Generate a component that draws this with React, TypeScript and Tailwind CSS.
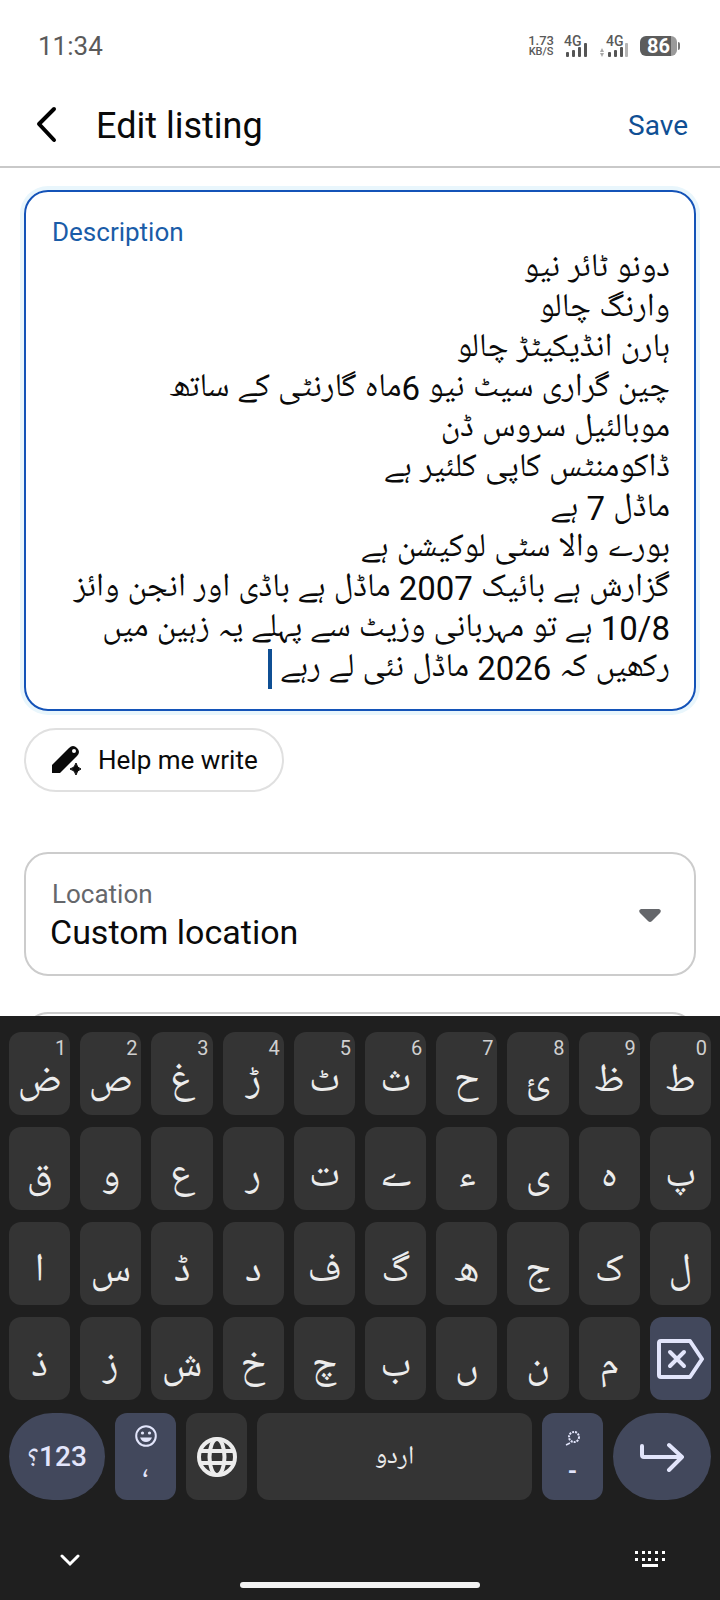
import React, { useState } from 'react'

const initialText = [
  'دونو ٹائر نیو',
  'وارنگ چالو',
  'ہارن انڈیکیٹڑ چالو',
  'چین گراری سیٹ نیو 6ماہ گارنٹی کے ساتھ',
  'موبالئیل سروس ڈن',
  'ڈاکومنٹس کاپی کلئیر ہے',
  'ماڈل 7 ہے',
  'بورے والا سٹی لوکیشن ہے',
  'گزارش ہے بائیک 2007 ماڈل ہے باڈی اور انجن وائز',
  '10/8 ہے تو مہربانی وزیٹ سے پہلے یہ زہین میں',
  'رکھیں کہ 2026 ماڈل نئی لے رہے',
].join('\n')

const keyRows = [
  ['ض', 'ص', 'غ', 'ڑ', 'ٹ', 'ث', 'ح', 'ئ', 'ظ', 'ط'],
  ['ق', 'و', 'ع', 'ر', 'ت', 'ے', 'ء', 'ی', 'ہ', 'پ'],
  ['ا', 'س', 'ڈ', 'د', 'ف', 'گ', 'ھ', 'ج', 'ک', 'ل'],
  ['ذ', 'ز', 'ش', 'خ', 'چ', 'ب', 'ں', 'ن', 'م'],
]
const hints = ['1', '2', '3', '4', '5', '6', '7', '8', '9', '0']

function Signal({ weak = false }: { weak?: boolean }) {
  return (
    <div className="relative h-6 w-7">
      <span className={`absolute top-0 text-sm font-medium leading-none ${weak ? 'left-1.5' : 'left-0'}`}>4G</span>
      <svg className="absolute bottom-0 left-0" width="28" height="15" viewBox="0 0 28 15">
        {weak && <path d="M0 9l2-4 2 4zM0 10l2 4 2-4z" fill="#a8a8a8" />}
        <g fill="#555">
          <rect x={weak ? 8 : 2} y="9" width="3" height="5" rx="1" />
          <rect x={weak ? 14 : 8} y="7" width="3" height="7" rx="1" />
          <rect x={weak ? 20 : 14} y="4" width="3" height="10" rx="1" />
          <rect x={weak ? 25 : 20} y="0" width="3" height="14" rx="1" fill={weak ? '#b5b5b5' : '#555'} />
        </g>
      </svg>
    </div>
  )
}

function StatusBar() {
  return (
    <div className="flex h-20 shrink-0 items-center justify-between pl-[38px] pr-10 pt-3 text-[#5a5a5a]">
      <span className="text-[26px] leading-8">11:34</span>
      <div className="flex items-center">
        <div className="mr-2.5 text-center font-medium leading-none">
          <div className="text-[13px] leading-[11px]">1.73</div>
          <div className="text-[11px] leading-[11px]">KB/S</div>
        </div>
        <Signal />
        <div className="ml-2">
          <Signal weak />
        </div>
        <div className="ml-3 flex items-center">
          <div className="flex h-5 w-[37px] items-center justify-center rounded-md bg-linear-to-r from-[#5c5c5c] from-85% to-[#9a9a9a] to-85% text-xl font-bold leading-none text-white">
            86
          </div>
          <div className="ml-px h-2 w-0.5 rounded-r bg-[#777]" />
        </div>
      </div>
    </div>
  )
}

function LetterKey({ letter, hint }: { letter: string; hint?: string }) {
  return (
    <button className="relative h-[83px] rounded-xl bg-[#343434] pt-[18px] text-[40px] leading-none text-[#ececec]">
      {letter}
      {hint && <span className="absolute right-1 top-1.5 text-xl leading-5 text-[#d0d0d0]">{hint}</span>}
    </button>
  )
}

function Keyboard() {
  return (
    <div className="shrink-0 bg-[#1f1f1f] px-[9px] pt-4">
      <div className="grid grid-cols-10 gap-x-2.5 gap-y-3">
        {keyRows.map((row, r) =>
          row.map((letter, i) => <LetterKey key={letter} letter={letter} hint={r === 0 ? hints[i] : undefined} />)
        )}
        <button aria-label="Backspace" className="flex h-[83px] items-center justify-center rounded-xl bg-[#42485c]">
          <svg width="48" height="40" viewBox="0 0 48 40" fill="none" stroke="#e2e5fb" strokeWidth="4" strokeLinecap="round" strokeLinejoin="round">
            <path d="M5 2H34L46 20L34 38H5Q3 38 3 36V4Q3 2 5 2Z" />
            <path d="M14 13L28 27M28 13L14 27" />
          </svg>
        </button>
      </div>

      <div className="mt-[13px] flex h-[87px] gap-2.5 text-[#e2e5fb]">
        <button className="flex w-24 items-center justify-center rounded-full bg-[#42485c] text-[28px] font-medium">
          <span className="pt-1 font-normal">؟</span>
          <span>123</span>
        </button>
        <button className="flex w-[61px] flex-col items-center rounded-xl bg-[#42485c] pt-3">
          <svg width="22" height="22" viewBox="0 0 22 22">
            <circle cx="11" cy="11" r="9.8" fill="none" stroke="#e2e5fb" strokeWidth="2" />
            <circle cx="7.5" cy="8" r="1.6" fill="#e2e5fb" />
            <circle cx="14.5" cy="8" r="1.6" fill="#e2e5fb" />
            <path d="M5 12.5H17Q15 17 11 17T5 12.5Z" fill="#e2e5fb" />
          </svg>
          <span className="mt-2.5 text-3xl leading-6">،</span>
        </button>
        <button aria-label="Change language" className="flex w-[61px] items-center justify-center rounded-xl bg-[#343434]">
          <svg width="40" height="40" viewBox="0 0 40 40" fill="none" stroke="#ececec" strokeWidth="4">
            <circle cx="20" cy="20" r="18" />
            <ellipse cx="20" cy="20" rx="7.5" ry="18" />
            <path d="M3 14H37M3 26H37" />
          </svg>
        </button>
        <button className="min-w-0 flex-1 rounded-xl bg-[#343434] pt-1 text-[26px] text-[#ececec]">اردو</button>
        <button className="flex w-[61px] flex-col items-center rounded-xl bg-[#42485c] pt-4">
          <svg width="18" height="20" viewBox="0 0 18 20" fill="none" stroke="#e2e5fb">
            <circle cx="10" cy="8" r="5" strokeWidth="2" strokeDasharray="2 1" />
            <path d="M2 16L6 14" strokeWidth="1.5" />
          </svg>
          <span className="mt-2.5 text-2xl font-bold leading-6">-</span>
        </button>
        <button aria-label="Enter" className="flex w-[98px] items-center justify-center rounded-full bg-[#42485c]">
          <svg width="46" height="30" viewBox="0 0 46 30" fill="none" stroke="#e2e5fb" strokeWidth="4" strokeLinecap="round" strokeLinejoin="round">
            <path d="M3 4V13Q3 15 5 15H43M30 3L43 15L30 28" />
          </svg>
        </button>
      </div>

      <div className="relative mt-10 flex h-[60px] items-start justify-between pl-[51px] pr-[46px] pt-[11px]">
        <button aria-label="Hide keyboard" className="pt-0.5">
          <svg width="20" height="14" viewBox="0 0 20 14" fill="none" stroke="#fff" strokeWidth="3" strokeLinecap="round">
            <path d="M2 3L10 11L18 3" />
          </svg>
        </button>
        <button aria-label="Switch keyboard">
          <svg width="30" height="17" viewBox="0 0 30 17" fill="#fff">
            <path d="M0 0h3v3h-3zM7 0h3v3h-3zM13 0h3v3h-3zM20 0h3v3h-3zM27 0h3v3h-3zM0 7h3v3h-3zM7 7h3v3h-3zM13 7h3v3h-3zM20 7h3v3h-3zM27 7h3v3h-3zM7 13h16v3h-16z" />
          </svg>
        </button>
        <div className="absolute bottom-3 left-1/2 h-1.5 w-60 -translate-x-1/2 rounded-full bg-[#f2f2f2]" />
      </div>
    </div>
  )
}

export default function App() {
  const [text, setText] = useState(initialText)

  return (
    <div className="flex h-screen flex-col overflow-hidden bg-white font-[Roboto,'Noto_Naskh_Arabic_UI','Noto_Naskh_Arabic','Noto_Sans_Arabic',sans-serif] text-[#0a0a0a]">
      <StatusBar />
      <header className="flex h-22 shrink-0 items-center border-b-2 border-[#c9c9c9] pl-9 pr-8 pt-1">
        <button aria-label="Back">
          <svg width="22" height="38" viewBox="0 0 22 38" fill="none" stroke="#000" strokeWidth="4" strokeLinecap="round" strokeLinejoin="round">
            <path d="M18 3L3 18L18 34" />
          </svg>
        </button>
        <h1 className="ml-[38px] pt-0.5 text-4xl leading-10">Edit listing</h1>
        <button className="ml-auto pt-0.5 text-[28px] leading-10 text-[#0f4f94]">Save</button>
      </header>

      <main className="min-h-0 flex-1 overflow-hidden px-6 pt-[22px]">
        <div className="rounded-3xl border-2 border-[#1453b8] px-6 pb-5 pt-6 shadow-[0_0_0_4px_#e9f6fc]">
          <label htmlFor="description" className="block pl-0.5 text-[26px] leading-8 text-[#1a5ca8]">
            Description
          </label>
          <div className="relative pt-px">
            <textarea
              id="description"
              dir="rtl"
              rows={11}
              value={text}
              onChange={(e) => setText(e.target.value)}
              className="block w-full resize-none overflow-hidden whitespace-pre bg-transparent text-[33px] leading-10 caret-transparent outline-none"
            />
            <span className="absolute bottom-0 right-[398px] h-10 w-1 bg-[#0f4f94]" />
          </div>
        </div>

        <button className="mt-[17px] flex h-16 items-center rounded-full border-2 border-[#e0e0e0] pl-6 pr-6 text-[26px] leading-8">
          <svg width="32" height="30" viewBox="0 0 32 30" className="mr-4">
            <path d="M2 28V20L19 3Q23-1 27 3T27 11L10 28Z" fill="#0a0a0a" />
            <circle cx="24" cy="6" r="2" fill="#fff" />
            <path d="M26 18Q27 23 31 24Q27 25 26 30Q25 25 20 24Q25 23 26 18Z" fill="#0a0a0a" stroke="#0a0a0a" />
          </svg>
          Help me write
        </button>

        <div className="relative mt-[60px] rounded-3xl border-2 border-[#cccccc] px-6 pb-[21px] pt-[23px]">
          <label htmlFor="location" className="block pl-0.5 text-[26px] leading-[34px] text-[#65676b]">
            Location
          </label>
          <select id="location" className="block w-full appearance-none bg-transparent text-[34px] leading-[42px] outline-none">
            <option>Custom location</option>
          </select>
          <svg className="pointer-events-none absolute right-8 top-[54px]" width="24" height="16" viewBox="0 0 24 16">
            <path d="M3 1H21Q24 2 22 5L14 13Q12 15 10 13L2 5Q0 2 3 1Z" fill="#65676b" />
          </svg>
        </div>
        <div className="mt-9 h-30 rounded-3xl border-2 border-[#cccccc]" />
      </main>

      <Keyboard />
    </div>
  )
}
